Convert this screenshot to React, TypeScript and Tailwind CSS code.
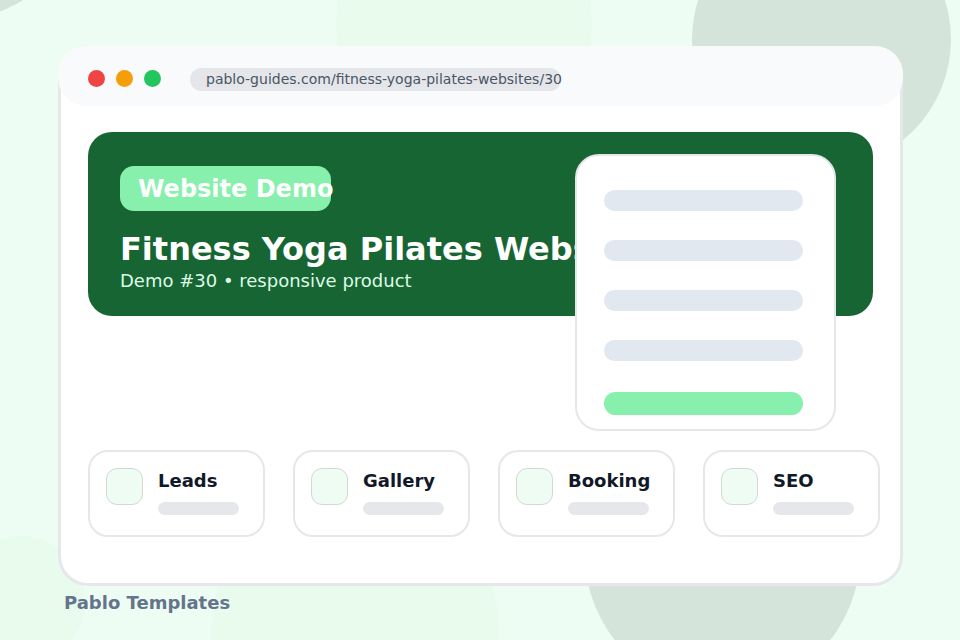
const lines = ["one", "two", "three", "four"];
const features = ["Leads", "Gallery", "Booking", "SEO"];

function Backdrop() {
  return (
    <div aria-hidden="true" className="absolute inset-0 overflow-hidden">
      <div className="absolute -left-[176px] -top-[240px] size-[260px] rounded-full bg-[#d4e4da]" />
      <div className="absolute left-[336px] -top-[106px] size-[256px] rounded-full bg-[#e8fbed]" />
      <div className="absolute left-[692px] -top-[90px] size-[259px] rounded-full bg-[#d4e4da]" />
      <div className="absolute -left-[45px] top-[536px] size-[130px] rounded-full bg-[#e8fbed]" />
      <div className="absolute left-[211px] top-[486px] size-[288px] rounded-full bg-[#e8fbed]" />
      <div className="absolute left-[585px] top-[417px] size-[275px] rounded-full bg-[#d4e4da]" />
    </div>
  );
}

function BrowserBar() {
  return (
    <header className="-mx-[3px] -mt-[3px] flex h-[60px] items-start rounded-[28px] bg-[#f9fafc] pl-[30px] pt-[22px]">
      <div className="mt-0.5 flex gap-[11px]">
        <span className="size-[17px] rounded-full bg-[#ef4444]" />
        <span className="size-[17px] rounded-full bg-[#f59e0b]" />
        <span className="size-[17px] rounded-full bg-[#22c55e]" />
      </div>
      <div className="ml-[29px] h-[23px] w-[371px] whitespace-nowrap rounded-full bg-[#e4e6ea] pl-4 text-sm leading-[23px] text-[#4b5563]">
        pablo-guides.com/fitness-yoga-pilates-websites/30
      </div>
    </header>
  );
}

function Hero() {
  return (
    <section className="relative mt-[26px] h-[184px] rounded-[24px] bg-[#186534] px-8 pt-[34px]">
      <div className="h-[45px] w-[211px] whitespace-nowrap rounded-[14px] bg-[#86f0ac] pl-[18px] text-2xl font-bold leading-[46px] text-white">
        Website Demo
      </div>
      <h1 className="mt-[18px] overflow-hidden whitespace-nowrap text-[32px] font-bold leading-[40px] text-white">
        Fitness Yoga Pilates Websites
      </h1>
      <p className="text-lg leading-6 text-[#dcfce7]">Demo #30 • responsive product</p>
      <div className="absolute right-[37px] top-[22px] w-[261px] rounded-[24px] border-2 border-[#e5e7eb] bg-white px-[27px] pb-[14px] pt-[34px]">
        <div className="flex flex-col gap-[29px]">
          {lines.map((line) => (
            <div key={line} className="mr-1 h-[21px] rounded-full bg-[#e2e8f0]" />
          ))}
        </div>
        <div className="mr-1 mt-[31px] h-[23px] rounded-full bg-[#86f0ac]" />
      </div>
    </section>
  );
}

function Feature({ title }: { title: string }) {
  return (
    <article className="flex h-[87px] gap-[15px] rounded-[20px] border-2 border-[#e5e7eb] pl-4 pt-4">
      <div className="size-[37px] shrink-0 rounded-[11px] border border-[#cfdad4] bg-[#effcf4]" />
      <div>
        <h2 className="text-lg font-bold leading-[26px] text-[#111827]">{title}</h2>
        <div className="mt-2 h-[13px] w-[81px] rounded-full bg-[#e5e7eb]" />
      </div>
    </article>
  );
}

export default function App() {
  return (
    <div className="relative min-h-screen overflow-hidden bg-[#eefdf4] pl-[58px] pr-[57px] pt-[46px] font-['DejaVu_Sans',sans-serif]">
      <Backdrop />
      <main className="relative rounded-[30px] border-[3px] border-[#e5e7eb] bg-white pb-[46px]">
        <BrowserBar />
        <div className="px-[27px]">
          <Hero />
        </div>
        <div className="mt-[134px] grid grid-cols-4 gap-7 pl-[27px] pr-5">
          {features.map((title) => (
            <Feature key={title} title={title} />
          ))}
        </div>
      </main>
      <footer className="relative pl-[6px] pt-[5px] text-lg font-bold leading-6 text-[#64748b]">Pablo Templates</footer>
    </div>
  );
}
